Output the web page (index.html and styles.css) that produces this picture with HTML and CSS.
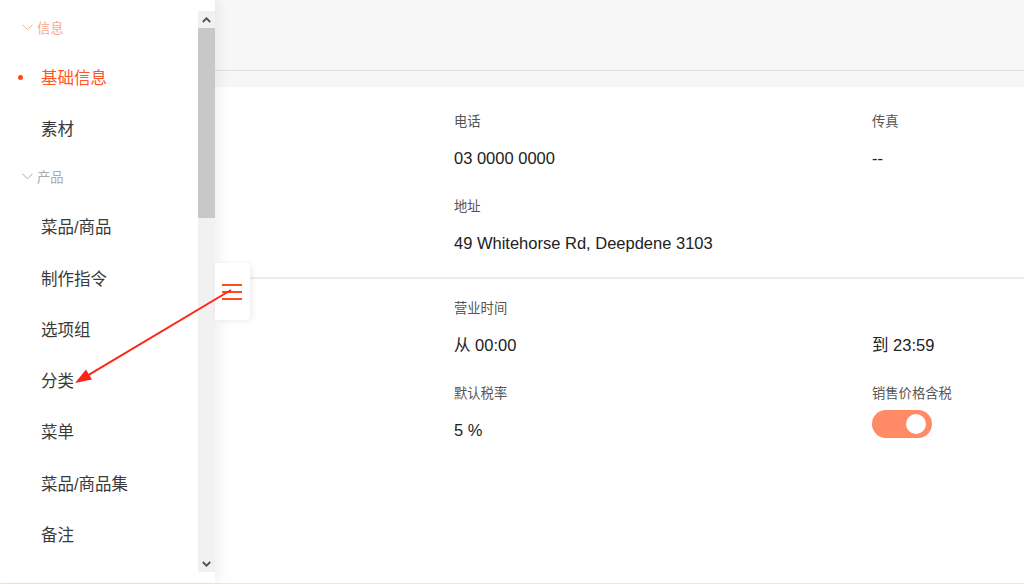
FILE: index.html
```html
<!DOCTYPE html>
<html lang="zh">
<head>
<meta charset="utf-8">
<title>基础信息</title>
<link rel="stylesheet" href="styles.css">
</head>
<body>
<div class="page">
  <aside class="sidebar">
    <nav class="nav">
      <div class="group group-active"><svg class="chev" width="11" height="7" viewBox="0 0 11 7"><path d="M0.5 0.8 L5.5 5.8 L10.5 0.8" fill="none" stroke="currentColor" stroke-width="1"/></svg>信息</div>
      <div class="item active">基础信息</div>
      <div class="item">素材</div>
      <div class="group group-2"><svg class="chev" width="11" height="7" viewBox="0 0 11 7"><path d="M0.5 0.8 L5.5 5.8 L10.5 0.8" fill="none" stroke="currentColor" stroke-width="1"/></svg>产品</div>
      <div class="item">菜品/商品</div>
      <div class="item">制作指令</div>
      <div class="item">选项组</div>
      <div class="item">分类</div>
      <div class="item">菜单</div>
      <div class="item">菜品/商品集</div>
      <div class="item">备注</div>
    </nav>
    <div class="scrollbar">
      <div class="sb-btn sb-up"><svg width="9" height="6" viewBox="0 0 9 6"><path d="M0.8 5 L4.5 1.3 L8.2 5" fill="none" stroke="#505050" stroke-width="1.8"/></svg></div>
      <div class="sb-thumb"></div>
      <div class="sb-track"></div>
      <div class="sb-btn sb-down"><svg width="9" height="6" viewBox="0 0 9 6"><path d="M0.8 1 L4.5 4.7 L8.2 1" fill="none" stroke="#505050" stroke-width="1.8"/></svg></div>
    </div>
  </aside>
  <main class="main">
    <header class="topbar"></header>
    <section class="card">
      <div class="section sec-1">
        <div class="field"><div class="label">电话</div><div class="value">03 0000 0000</div></div>
        <div class="field"><div class="label">传真</div><div class="value">--</div></div>
        <div class="field"><div class="label">地址</div><div class="value">49 Whitehorse Rd, Deepdene 3103</div></div>
      </div>
      <div class="section sec-2">
        <div class="field"><div class="label">营业时间</div><div class="value">从 00:00</div></div>
        <div class="field"><div class="label"></div><div class="value">到 23:59</div></div>
        <div class="field"><div class="label">默认税率</div><div class="value">5 %</div></div>
        <div class="field"><div class="label">销售价格含税</div><div class="toggle"><span class="knob"></span></div></div>
      </div>
    </section>
  </main>
  <button class="menu-btn" aria-label="menu"><span></span><span></span><span></span></button>
  <svg class="annot" width="1024" height="584" viewBox="0 0 1024 584">
    <line x1="231" y1="290" x2="88.7" y2="374.8" stroke="#ff2418" stroke-width="2"/>
    <polygon points="75,383 92,379.5 86,369.5" fill="#ff2418"/>
  </svg>
</div>
</body>
</html>
```

FILE: styles.css
```css
* { box-sizing: border-box; }
html, body { margin: 0; padding: 0; }
body {
  width: 1024px;
  height: 584px;
  overflow: hidden;
  font-family: "Liberation Sans", "Noto Sans CJK SC", sans-serif;
  background: #fff;
}
.page {
  position: relative;
  display: flex;
  width: 1024px;
  height: 584px;
  border-bottom: 1px solid #ede6e3;
}
.sidebar {
  position: relative;
  z-index: 2;
  display: flex;
  width: 215px;
  flex: 0 0 215px;
  height: 583px;
  background: #fff;
  box-shadow: 3px 0 12px rgba(0,0,0,0.07);
}
.nav {
  width: 198px;
  padding-top: 9px;
}
.group {
  display: flex;
  align-items: center;
  height: 36px;
  padding-left: 22px;
  margin-bottom: 6px;
  font-size: 13.3px;
  color: #aaa;
}
.group-active { color: #f7a88c; }
.group-2 { margin-top: 5px; }
.chev {
  display: block;
  margin: 0 4px 0 0;
}
.item {
  position: relative;
  display: flex;
  align-items: center;
  height: 51.3px;
  padding-left: 41px;
  font-size: 16.5px;
  color: #3a3a3a;
}
.item.active { color: #ff5524; }
.item.active::before {
  content: "";
  position: absolute;
  left: 18px;
  top: 50%;
  width: 5px;
  height: 5px;
  margin-top: -2px;
  border-radius: 50%;
  background: #ff4a1a;
}
.scrollbar {
  display: flex;
  flex-direction: column;
  width: 17px;
  margin-top: 11px;
  height: 561px;
  background: #f1f1f1;
}
.sb-btn {
  display: flex;
  align-items: center;
  justify-content: center;
  height: 17px;
  flex: 0 0 17px;
}
.sb-thumb {
  height: 190px;
  flex: 0 0 190px;
  background: #c8c8c8;
}
.sb-track { flex: 1; }
.main {
  flex: 1;
  display: flex;
  flex-direction: column;
  background: #f6f6f6;
}
.topbar {
  height: 71px;
  flex: 0 0 71px;
  background: #f7f7f7;
  border-bottom: 1px solid #dedede;
}
.card {
  margin-top: 16px;
  flex: 1;
  background: #fff;
}
.section {
  display: grid;
  grid-template-columns: 418px 1fr;
  row-gap: 29px;
  padding-left: 239px;
}
.sec-1 {
  padding-top: 26px;
  padding-bottom: 23px;
  border-bottom: 2px solid #ececec;
}
.sec-2 { padding-top: 21px; }
.label {
  height: 18px;
  line-height: 18px;
  font-size: 13.3px;
  color: #555;
  margin-bottom: 16px;
}
.value {
  height: 22px;
  line-height: 22px;
  font-size: 16.5px;
  color: #222;
}
.toggle {
  position: relative;
  width: 60px;
  height: 28px;
  margin-top: -9px;
  border-radius: 14px;
  background: #ff8a66;
}
.knob {
  position: absolute;
  right: 6px;
  top: 4px;
  width: 20px;
  height: 20px;
  border-radius: 50%;
  background: #fff;
}
.menu-btn {
  position: absolute;
  z-index: 3;
  left: 215px;
  top: 263px;
  width: 35px;
  height: 57px;
  padding: 0 0 0 7px;
  border: 0;
  border-radius: 0 4px 4px 0;
  background: #fff;
  box-shadow: 2px 1px 6px rgba(0,0,0,0.08);
  display: flex;
  flex-direction: column;
  justify-content: center;
  gap: 5px;
}
.menu-btn span {
  display: block;
  width: 20px;
  height: 2px;
  background: #ff4d1a;
}
.annot {
  position: absolute;
  z-index: 4;
  left: 0;
  top: 0;
  pointer-events: none;
}
```
